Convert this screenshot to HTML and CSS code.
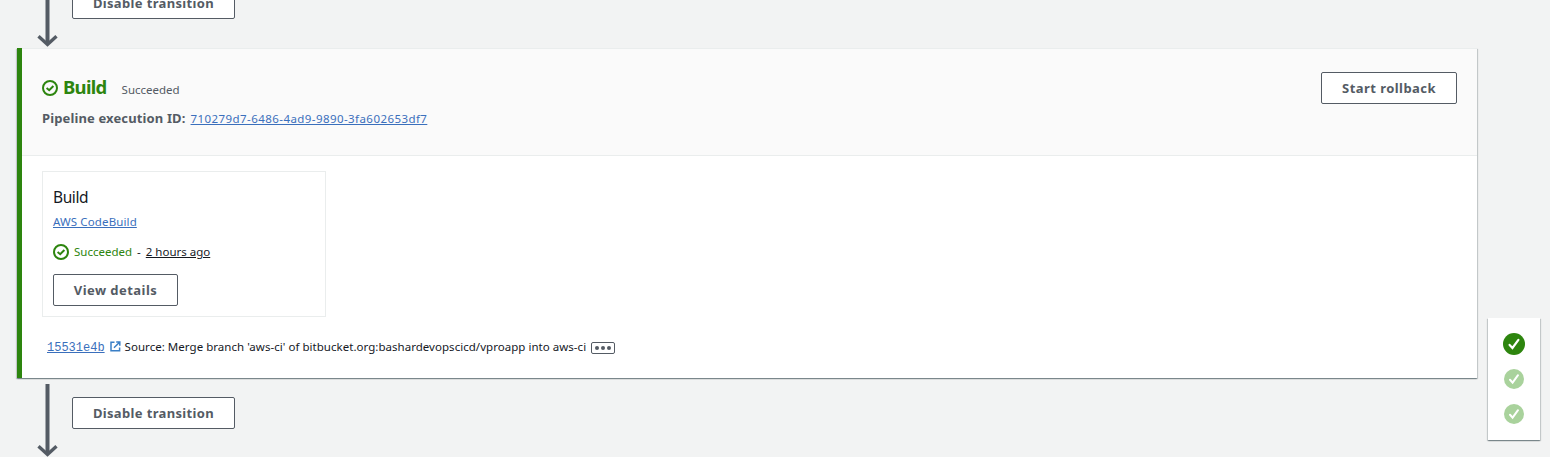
FILE: index.html
```html
<!DOCTYPE html>
<html lang="en">
<head>
<meta charset="utf-8">
<title>Pipeline</title>
<link rel="stylesheet" href="styles.css">
</head>
<body>
<svg class="defs" aria-hidden="true">
  <symbol id="arrow" viewBox="0 0 22 73"><path d="M10.5 0V69" stroke-width="4"/><path d="M1.5 62.3L10.5 70.5L19.5 62.3" stroke-width="3.4"/></symbol>
  <symbol id="ok" viewBox="0 0 16 16"><circle cx="8" cy="8" r="7"/><path d="M4.6 8L7.2 10.2L11.4 6"/></symbol>
  <symbol id="step" viewBox="0 0 20 20"><circle cx="10" cy="10" r="10"/><path d="M6 10.8L8.6 13.6L14 6.2"/></symbol>
</svg>
<main class="pipeline">
  <div class="transition transition-first">
    <svg class="arrow"><use href="#arrow"/></svg>
    <button class="btn btn-transition"><span class="t-disable">Disable transition</span></button>
  </div>
  <section class="stage">
    <header class="stage-head">
      <div>
        <div class="stage-title">
          <svg class="ok"><use href="#ok"/></svg>
          <h2>Build</h2>
          <span class="stage-status">Succeeded</span>
        </div>
        <div class="execution"><b>Pipeline execution ID:</b><a>710279d7-6486-4ad9-9890-3fa602653df7</a></div>
      </div>
      <button class="btn btn-rollback"><span class="t-rollback">Start rollback</span></button>
    </header>
    <div class="stage-body">
      <article class="action">
        <h3>Build</h3>
        <div class="provider"><a>AWS CodeBuild</a></div>
        <div class="action-status">
          <svg class="ok"><use href="#ok"/></svg>
          <span class="success">Succeeded</span><span class="dash">-</span><span class="ago">2 hours ago</span>
        </div>
        <button class="btn btn-details"><span class="t-details">View details</span></button>
      </article>
      <div class="source">
        <a class="commit">15531e4b</a>
        <svg class="external" viewBox="0 0 11 11"><path d="M4.5 1.3H1V9.7H9.6V6.5M6.2 1H9.8V4.8M9.8 1L4 6.8"/></svg>
        <span class="message">Source: Merge branch 'aws-ci' of bitbucket.org:bashardevopscicd/vproapp into aws-ci</span>
        <span class="more"><i></i><i></i><i></i></span>
      </div>
    </div>
  </section>
  <div class="transition">
    <svg class="arrow"><use href="#arrow"/></svg>
    <button class="btn btn-transition"><span class="t-disable">Disable transition</span></button>
  </div>
</main>
<nav class="steps">
  <svg class="step current"><use href="#step"/></svg>
  <svg class="step"><use href="#step"/></svg>
  <svg class="step"><use href="#step"/></svg>
</nav>
</body>
</html>
```
FILE: styles.css
```css
* { box-sizing: border-box; }
body {
  margin: 0; height: 457px; overflow: hidden; display: flex; align-items: flex-start;
  background: #f2f3f3; color: #16191f;
  font: 11.5px/20px "Noto Sans", "Open Sans", sans-serif;
}
.defs { position: absolute; width: 0; height: 0; }
svg { flex: none; display: block; }
a { color: #3a6fbc; text-decoration: underline; }
span, a, b, h2, h3 { white-space: nowrap; }
.pipeline { width: 1461px; margin-left: 17px; }
.transition { height: 79px; padding: 6px 0 0 20px; display: flex; align-items: flex-start; }
.transition-first { margin-top: -32px; height: 80px; }
.arrow { width: 22px; height: 73px; fill: none; stroke: #545b64; }
.transition .btn { margin: 13px 0 0 13px; }
.btn {
  height: 32px; padding: 0; border: 1px solid #545b64; border-radius: 2px; background: #fff;
  color: #545b64; font: bold 13px/20px "Noto Sans", sans-serif; letter-spacing: .45px;
  display: flex; align-items: center; justify-content: center;
}
.btn-transition { width: 163px; letter-spacing: .35px; }
.btn-rollback { width: 136px; }
.btn-details { width: 125px; }
.stage {
  height: 330px; width: 1460px; border-left: 5px solid #2d850e; background: #fff;
  box-shadow: 0 1px 1px rgba(0,28,36,.3), 1px 1px 1px rgba(0,28,36,.15), -1px 1px 1px rgba(0,28,36,.15);
}
.stage-head {
  height: 108px; padding: 23px 20px 0; display: flex; justify-content: space-between; align-items: flex-start;
  background: #fafafa; border-top: 1px solid #eaeded; border-bottom: 1px solid #eaeded;
}
.stage-title { display: flex; align-items: center; height: 32px; }
.ok { width: 16px; height: 16px; fill: none; stroke: #2d850e; stroke-width: 2; }
h2 { margin: -2px 15px 0 5px; font-size: 18.5px; letter-spacing: -.7px; line-height: 28px; color: #2d850e; }
.stage-status { color: #545b64; margin-top: 4px; }
.execution { display: flex; gap: 5px; margin-top: 4px; }
.execution b { font-size: 13px; letter-spacing: .13px; color: #545b64; }
.execution a { letter-spacing: .43px; padding-top: 1px; }
.stage-body { padding: 15px 20px; }
.action { width: 284px; height: 146px; border: 1px solid #eaeded; padding: 14px 10px; }
h3 { margin: 0; font-size: 15.5px; letter-spacing: -.4px; font-weight: 400; line-height: 22px; }
.provider { margin-top: 4px; letter-spacing: .12px; }
.action-status { display: flex; align-items: center; margin: 10px 0 12px; }
.success { color: #2d850e; margin-left: 5px; }
.dash { margin: 0 5px; }
.ago { text-decoration: underline; }
.source { display: flex; align-items: center; padding-left: 5px; margin-top: 20px; }
.commit { font: 12px/20px "Liberation Mono", monospace; padding-top: 1px; margin-bottom: -1px; }
.external { width: 11px; height: 11px; margin: -2px 4px 0 5px; fill: none; stroke: #3a7fc6; stroke-width: 1.5; }
.message { letter-spacing: .035px; }
.more { width: 24px; height: 12px; margin: 1px 0 0 5px; border: 1px solid #545b64; border-radius: 2px; display: flex; align-items: center; justify-content: center; gap: 2px; }
.more i { width: 4px; height: 4px; border-radius: 50%; background: #545b64; }
.steps {
  width: 52px; height: 122px; margin: 318px 0 0 10px; background: #fff; padding-top: 15px;
  display: flex; flex-direction: column; align-items: center; gap: 15px;
  box-shadow: 0 1px 1px rgba(0,28,36,.3), 1px 1px 1px rgba(0,28,36,.15), -1px 1px 1px rgba(0,28,36,.15);
}
.step { width: 20px; height: 20px; fill: #a9d29c; }
.step.current { width: 22px; height: 22px; fill: #2d850e; margin-bottom: -1px; }
#step path { fill: none; stroke: #fff; stroke-width: 2; stroke-linecap: round; }
```
